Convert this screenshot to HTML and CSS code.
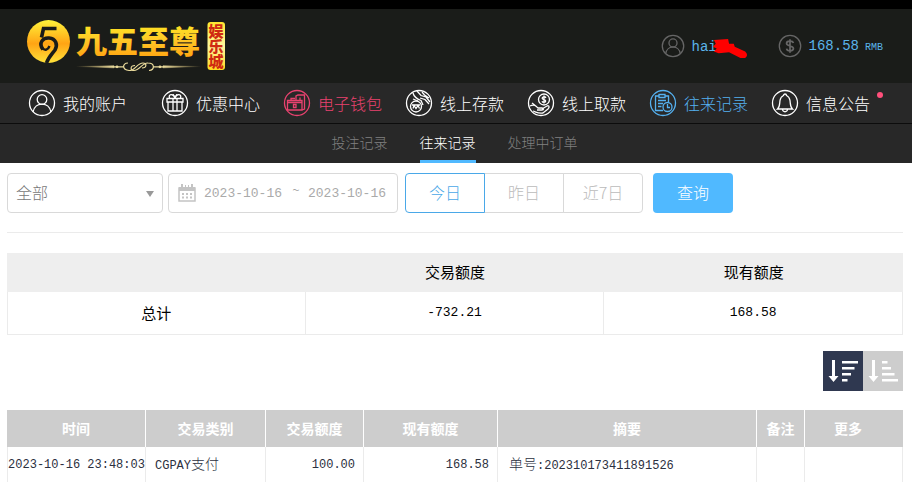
FILE: index.html
```html
<!DOCTYPE html>
<html lang="zh-CN">
<head>
<meta charset="utf-8">
<meta name="viewport" content="width=device-width, initial-scale=1">
<title>往来记录</title>
<link rel="stylesheet" href="styles.css">
</head>
<body>
<header class="top">
  <a class="logo" href="#">
    <svg width="204" height="56" viewBox="24 17 204 56">
      <defs>
        <linearGradient id="gold" x1="0" y1="0" x2="0" y2="1">
          <stop offset="0" stop-color="#fff21f"/><stop offset="0.5" stop-color="#ffc928"/><stop offset="1" stop-color="#ff9c0c"/>
        </linearGradient>
        <linearGradient id="ball" x1="0" y1="0" x2="0" y2="1">
          <stop offset="0" stop-color="#fff33a"/><stop offset="0.55" stop-color="#ffa414"/><stop offset="1" stop-color="#ffe23a"/>
        </linearGradient>
        <linearGradient id="seal" x1="0" y1="0" x2="0" y2="1">
          <stop offset="0" stop-color="#ffe62e"/><stop offset="0.5" stop-color="#fff9a0"/><stop offset="1" stop-color="#ffd91f"/>
        </linearGradient>
        <linearGradient id="fade" x1="76" y1="0" x2="201" y2="0" gradientUnits="userSpaceOnUse">
          <stop offset="0" stop-color="#d8bd70" stop-opacity="0"/><stop offset="0.3" stop-color="#eadb9c"/><stop offset="0.7" stop-color="#eadb9c"/><stop offset="1" stop-color="#d8bd70" stop-opacity="0"/>
        </linearGradient>
      </defs>
      <circle cx="48.500" cy="40.500" r="21.500" fill="url(#ball)"/>
      <path d="M56.500 27.500H43.500L41.500 36.500" fill="none" stroke="#1a1c19" stroke-width="3.600"/>
      <path d="M43 48.500C38 42 43 36.500 49 37C56 37.500 58 44 55 49C52 53 48.500 56 46.500 62" fill="none" stroke="#1a1c19" stroke-width="3.600"/>
      <path d="M42 47C45 50 48 49 49.500 45" fill="none" stroke="#1a1c19" stroke-width="2.400"/>
      <text class="logo-name" x="76" y="52" fill="url(#gold)">九五至尊</text>
      <path d="M76 65.500L114 64.800V66.800ZM201 65.500L163 64.800V66.800Z" fill="url(#fade)" stroke="url(#fade)" stroke-width="0.500"/>
      <g fill="none" stroke="#eadb9c" stroke-width="1.200">
        <path d="M128 62C122 62 122 69 129 69.500C135 70 137 62 143 62C147 62 147 67 142 67"/>
        <path d="M149 69.500C155 69 155 62 148 62C142 61.500 140 69.500 134 69.500C130 69.500 130 64.500 135 64.500"/>
        <path d="M114 65.800H124M153 65.800H163"/>
      </g>
      <circle cx="117" cy="65.800" r="1.400" fill="#eadb9c"/><circle cx="160" cy="65.800" r="1.400" fill="#eadb9c"/>
      <rect x="207.500" y="21" width="17.500" height="48" rx="3" fill="url(#seal)"/>
      <text class="logo-seal" x="216" y="22.500" fill="#cf2a12">娱乐城</text>
    </svg>
  </a>
  <div class="account">
    <div class="who">
      <svg class="acc-icon" viewBox="0 0 28 28"><circle cx="14" cy="14" r="12.500"/><circle cx="14" cy="10.500" r="4.700"/><path d="M5.500 23C7 12.500 21 12.500 22.500 23"/></svg>
      <span class="num">hai</span>
      <svg class="scribble" viewBox="0 0 38 22"><path d="M2 1L17 0L18 5L23 5L24 8L35 13Q39 17 35 20L30 20L18 14L7 15L2 13L5 10L1 8L4 5Z" fill="#f00"/></svg>
    </div>
    <div class="money">
      <svg class="acc-icon" viewBox="0 0 28 28"><circle cx="14" cy="14" r="12.500"/><path stroke-width="2" d="M18 10.500C17 7.500 10 7.500 10 11C10 14.500 18 13 18 17C18 20.500 10.500 20.500 10 17M14 6V22"/></svg>
      <span class="num">168.58<small class="unit">RMB</small></span>
    </div>
  </div>
</header>
<nav class="nav">
  <a class="nav-item" href="#"><svg viewBox="0 0 28 28"><circle cx="14" cy="14" r="12.500"/><circle cx="14" cy="10.500" r="4.800"/><path d="M5 23C7 12.500 21 12.500 23 23"/></svg>我的账户</a>
  <a class="nav-item" href="#"><svg viewBox="0 0 28 28"><circle cx="14" cy="14" r="12.500"/><path d="M6 9.500H22V13H6ZM7 13V22H21V13M12 9.500V22.500M16 9.500V22.500M14 9C12 4 7 5 8.500 9M14 9C16 4 21 5 19.500 9M12 5.500L14 8L16 5.500"/></svg>优惠中心</a>
  <a class="nav-item pink" href="#"><svg viewBox="0 0 28 28"><circle cx="14" cy="14" r="12.500"/><path d="M4.500 11.500H19V21H4.500ZM4.500 13.500H19M13 11V7L15 6H21.500V20L19 21M17 8.500V11M10.500 15.500H13V18.500H10.500ZM8 11V9.500H12"/></svg>电子钱包</a>
  <a class="nav-item" href="#"><svg viewBox="0 0 28 28"><circle cx="14" cy="14" r="12.500"/><circle cx="11" cy="17.500" r="5.500"/><path d="M7 16H15M8 19.500L9 16.500L11 19.500L13 16.500L14.500 19.500M8 4C9 8 12 10 16 11.500L18 16M12 2L16 6.500L21 8L25 13M17 3L19.500 6L24 9M15 9L20 10.500L24 15M8 10L13 12"/></svg>线上存款</a>
  <a class="nav-item" href="#"><svg viewBox="0 0 28 28"><circle cx="14" cy="14" r="12.500"/><circle cx="17" cy="10.500" r="5.500"/><path d="M19 8.800C18 7.200 15 7.500 15.200 9.300C15.500 11 18.500 10.200 18.700 12C18.700 14 15.500 13.700 15 12.300M17 6.500V14.500M3 17C7 15 9 17 11 19H15C17 19 17 21 15 21H10M15 20L20 17C22 16 23 18 21 20L16 24C12 25 9 23 6 22M5 14L10 18"/></svg>线上取款</a>
  <a class="nav-item blue" href="#"><svg viewBox="0 0 28 28"><circle cx="14" cy="14" r="12.500"/><path d="M14 21.500H6.500V7H9.500M16.500 7H19.500V13M10 5.500H16V8.500H10ZM9 11.500H17M9 14.500H14M9 17.500H12.500"/><circle cx="18.500" cy="18" r="4.500"/><path d="M18.500 15V18.500H21"/></svg>往来记录</a>
  <a class="nav-item" href="#"><svg viewBox="0 0 28 28"><circle cx="14" cy="14" r="12.500"/><path d="M6.500 20C9 18 8.500 15 9 11.500C9.500 8 11.500 7 12.500 6.500C12.500 4.500 15.500 4.500 15.500 6.500C16.500 7 18.500 8 19 11.500C19.500 15 19 18 21.500 20ZM11.500 20.500C12 23.500 16 23.500 16.500 20.500"/></svg>信息公告<span class="dot"></span></a>
</nav>
<nav class="subnav">
  <a href="#">投注记录</a>
  <a class="current" href="#" aria-current="page">往来记录</a>
  <a href="#">处理中订单</a>
</nav>
<main class="main">
  <form class="filters">
    <div class="kind"><select aria-label="类别"><option>全部</option></select></div>
    <div class="dates">
      <svg width="18" height="18" viewBox="0 0 18 18"><path d="M1 4H17V17H1Z" fill="#fff" stroke="#c4c4c4" stroke-width="1.500"/><path d="M1 3H17V7H1ZM3 0H5V4H3ZM7 1H8V4H7ZM10 1H11V4H10ZM13 0H15V4H13Z" fill="#c4c4c4"/><path d="M4 10H14M4 13.500H14" stroke="#c4c4c4" stroke-width="2" stroke-dasharray="2 2"/></svg>
      <input class="num" type="text" aria-label="开始日期" value="2023-10-16"><span class="tilde">~</span><input class="num" type="text" aria-label="结束日期" value="2023-10-16">
    </div>
    <div class="ranges">
      <button type="button" class="active">今日</button><button type="button">昨日</button><button type="button">近7日</button>
    </div>
    <button type="submit" class="query">查询</button>
  </form>
  <table class="summary">
    <thead><tr><th></th><th>交易额度</th><th>现有额度</th></tr></thead>
    <tbody><tr><td>总计</td><td class="num">-732.21</td><td class="num">168.58</td></tr></tbody>
  </table>
  <div class="sort">
    <button type="button" class="on" aria-label="降序"><svg viewBox="0 0 40 40"><path d="M9 9H12V25H15.500L10.500 31L5.500 25H9ZM19 10H35V12.500H19ZM19 16H31.500V18.500H19ZM19 22H28V24.500H19ZM19 28H24.500V30.500H19Z"/></svg></button>
    <button type="button" aria-label="升序"><svg viewBox="0 0 40 40"><path d="M9 9H12V25H15.500L10.500 31L5.500 25H9ZM19 10H24.500V12.500H19ZM19 16H28V18.500H19ZM19 22H31.500V24.500H19ZM19 28H35V30.500H19Z"/></svg></button>
  </div>
  <table class="records">
    <colgroup><col class="c-time"><col class="c-type"><col class="c-amount"><col class="c-balance"><col><col class="c-note"><col class="c-more"></colgroup>
    <thead><tr><th>时间</th><th>交易类别</th><th>交易额度</th><th>现有额度</th><th>摘要</th><th>备注</th><th>更多</th></tr></thead>
    <tbody><tr>
      <td class="num">2023-10-16 23:48:03</td>
      <td><span class="num">CGPAY</span>支付</td>
      <td class="right num">100.00</td>
      <td class="right num">168.58</td>
      <td>单号<span class="num">:202310173411891526</span></td>
      <td></td><td></td>
    </tr></tbody>
  </table>
</main>
</body>
</html>
```
FILE: styles.css
```css
* { box-sizing: border-box; }
body {
  margin: 0;
  background: #fff;
  color: #000;
  font: 300 16px/20px "Noto Sans CJK SC", sans-serif;
}
a { color: inherit; text-decoration: none; }
button, input, select { font: inherit; margin: 0; }
.num { font-family: "Liberation Mono", "Noto Sans CJK SC", monospace; }

.top {
  display: flex;
  justify-content: space-between;
  align-items: center;
  height: 83px;
  padding: 0 29px 0 24px;
  border-top: 9px solid #000;
  background: #1a1c19;
}
.logo svg { display: block; }
.logo-name { font: 900 31px "Noto Sans CJK SC", sans-serif; }
.logo-seal { font: 900 15px "Noto Sans CJK SC", sans-serif; writing-mode: vertical-rl; }
.account { display: flex; color: #5ab4ea; }
.who, .money { display: flex; align-items: center; position: relative; }
.who { width: 117px; }
.acc-icon { width: 24px; height: 24px; margin-right: 7px; fill: none; stroke: #666; stroke-width: 1.5; }
.account .num { padding-top: 2px; font-size: 14px; }
.account .unit { margin-left: 6px; font-size: 10px; }
.scribble { position: absolute; left: 51px; top: 5px; width: 36px; height: 21px; }

.nav {
  display: flex;
  gap: 23px;
  height: 41px;
  padding-left: 28px;
  background: #282828;
  border-bottom: 1px solid #0c0c0c;
  color: #fff;
}
.nav-item { display: flex; align-items: center; gap: 7px; position: relative; white-space: nowrap; }
.nav-item:first-child { margin-right: 11px; }
.nav-item svg { width: 28px; height: 28px; fill: none; stroke: currentColor; stroke-width: 1.3; }
.pink { color: #e8426f; }
.blue { color: #55b1f0; }
.dot { position: absolute; right: -13px; top: 9px; width: 6px; height: 6px; border-radius: 50%; background: #ff4f7b; }

.subnav {
  display: flex;
  justify-content: center;
  gap: 32px;
  height: 39px;
  padding-right: 3px;
  background: #282828;
  color: #808080;
  font-size: 14px;
  line-height: 37px;
}
.subnav .current { color: #fff; border-bottom: 3px solid #50b9ff; }

.main { padding: 10px 9px 0 7px; }
.filters { display: flex; padding-bottom: 19px; border-bottom: 1px solid #ebebeb; color: #999; }
.kind { position: relative; width: 156px; }
.kind::after {
  content: "";
  position: absolute;
  right: 9px;
  top: 18px;
  border: 4px solid transparent;
  border-top: 6px solid #999;
  border-bottom: 0;
}
.kind select {
  width: 100%;
  height: 40px;
  padding: 0 8px 2px;
  appearance: none;
  border: 1px solid #d9d9d9;
  border-radius: 4px;
  background: #fff;
  color: #777;
}
.dates {
  display: flex;
  align-items: center;
  width: 230px;
  height: 40px;
  margin: 0 7px 0 5px;
  padding-left: 9px;
  border: 1px solid #d9d9d9;
  border-radius: 4px;
}
.dates input { width: 80px; padding: 2px 0 0; border: 0; background: none; color: #aaa; font-size: 13px; }
.dates svg { margin-right: 8px; }
.tilde { width: 24px; padding-bottom: 8px; text-align: center; font-size: 14px; }
.ranges { display: flex; }
.ranges button {
  width: 80px;
  height: 40px;
  padding: 0 0 2px;
  border: 1px solid #d9d9d9;
  background: #fff;
  color: #bbb;
}
.ranges button + button { margin-left: -1px; }
.ranges button:first-child { border-radius: 4px 0 0 4px; }
.ranges button:last-child { border-radius: 0 4px 4px 0; }
.ranges .active { position: relative; border-color: #4aa8e8; color: #4aa8e8; }
.query { width: 80px; height: 40px; margin-left: 10px; padding: 0 0 2px; border: 0; border-radius: 4px; background: #50b9ff; color: #fff; }

table { width: 100%; border-collapse: separate; border-spacing: 0; table-layout: fixed; }
th, td { padding: 0; }
th { padding-bottom: 2px; }
.summary { margin-top: 20px; font-size: 15px; text-align: center; }
.summary th { height: 39px; background: #eee; font-weight: 400; }
.summary td { height: 43px; border-right: 1px solid #ebebeb; border-bottom: 1px solid #ebebeb; font-weight: 400; }
.summary td:first-child { border-left: 1px solid #ebebeb; }
.summary .num { font-size: 13px; }

.sort { display: flex; justify-content: flex-end; margin: 16px 0 19px; }
.sort button { width: 40px; height: 40px; padding: 0; border: 0; background: #cdcdcd; }
.sort .on { background: #2f3850; }
.sort svg { display: block; fill: #fff; }

.records { font-size: 14px; color: #2b3040; }
.c-time { width: 139px; }
.c-type { width: 120px; }
.c-amount { width: 98px; }
.c-balance { width: 134px; }
.c-note { width: 48px; }
.c-more { width: 98px; }
.records th { height: 37px; background: #cdcdcd; border-right: 1px solid #fff; color: #fff; font-weight: 700; }
.records th:last-child { padding-right: 12px; border-right: 0; }
.records td { height: 35px; padding: 0 8px 0 9px; border-right: 1px solid #ebebeb; white-space: nowrap; }
.records td:first-child { padding: 0; border-left: 1px solid #ebebeb; text-align: center; }
.records td:nth-child(5) { padding-left: 11px; }
.records .num { font-size: 12px; }
.records .right { text-align: right; }
```
